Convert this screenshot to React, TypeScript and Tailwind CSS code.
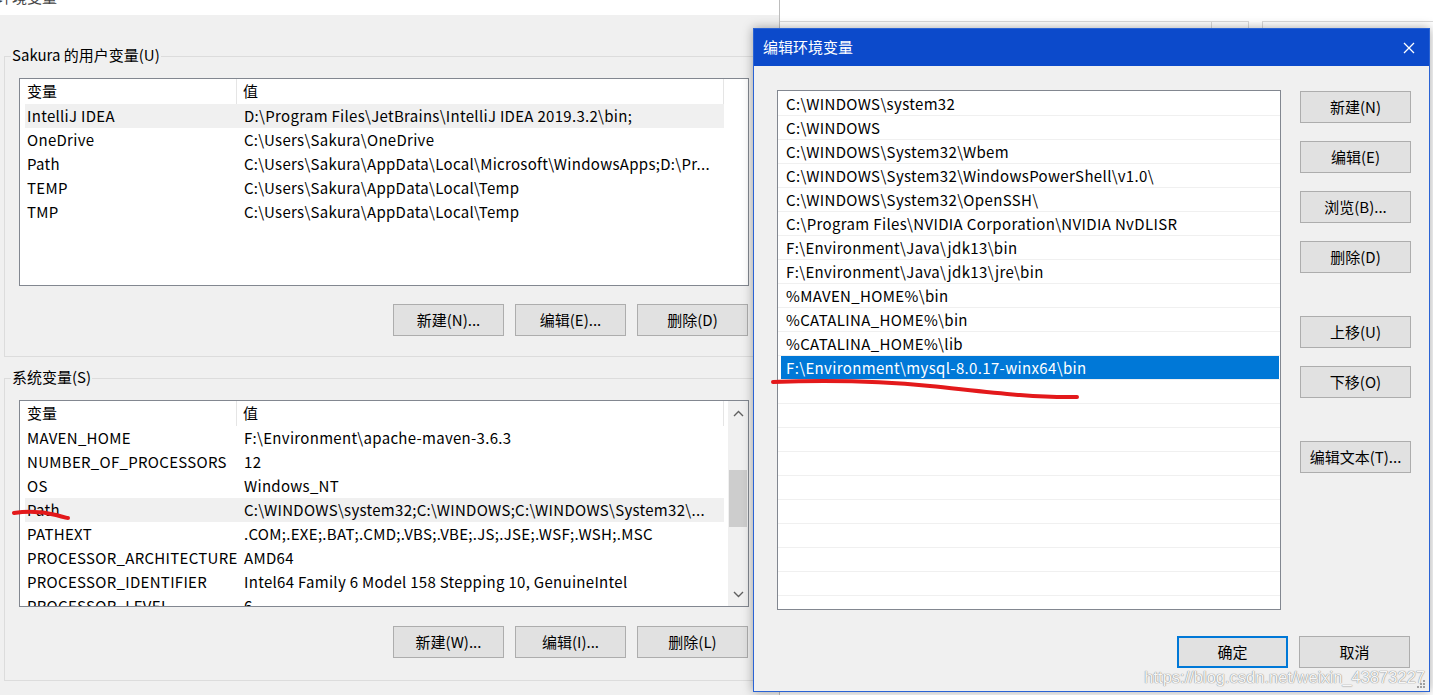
import React from "react";

const userVars: [string, string][] = [
  ["IntelliJ IDEA", "D:\\Program Files\\JetBrains\\IntelliJ IDEA 2019.3.2\\bin;"],
  ["OneDrive", "C:\\Users\\Sakura\\OneDrive"],
  ["Path", "C:\\Users\\Sakura\\AppData\\Local\\Microsoft\\WindowsApps;D:\\Pr..."],
  ["TEMP", "C:\\Users\\Sakura\\AppData\\Local\\Temp"],
  ["TMP", "C:\\Users\\Sakura\\AppData\\Local\\Temp"],
];

const sysVars: [string, string][] = [
  ["MAVEN_HOME", "F:\\Environment\\apache-maven-3.6.3"],
  ["NUMBER_OF_PROCESSORS", "12"],
  ["OS", "Windows_NT"],
  ["Path", "C:\\WINDOWS\\system32;C:\\WINDOWS;C:\\WINDOWS\\System32\\..."],
  ["PATHEXT", ".COM;.EXE;.BAT;.CMD;.VBS;.VBE;.JS;.JSE;.WSF;.WSH;.MSC"],
  ["PROCESSOR_ARCHITECTURE", "AMD64"],
  ["PROCESSOR_IDENTIFIER", "Intel64 Family 6 Model 158 Stepping 10, GenuineIntel"],
  ["PROCESSOR_LEVEL", "6"],
];

const paths = [
  "C:\\WINDOWS\\system32",
  "C:\\WINDOWS",
  "C:\\WINDOWS\\System32\\Wbem",
  "C:\\WINDOWS\\System32\\WindowsPowerShell\\v1.0\\",
  "C:\\WINDOWS\\System32\\OpenSSH\\",
  "C:\\Program Files\\NVIDIA Corporation\\NVIDIA NvDLISR",
  "F:\\Environment\\Java\\jdk13\\bin",
  "F:\\Environment\\Java\\jdk13\\jre\\bin",
  "%MAVEN_HOME%\\bin",
  "%CATALINA_HOME%\\bin",
  "%CATALINA_HOME%\\lib",
  "F:\\Environment\\mysql-8.0.17-winx64\\bin",
];

function Btn({ label, primary = false, className = "" }: { label: string; primary?: boolean; className?: string }) {
  return (
    <div
      className={
        "flex h-[32px] w-[111px] shrink-0 items-center justify-center bg-[#e1e1e1] text-[15px] text-black " +
        (primary ? "border-2 border-[#0078d7] " : "border border-[#adadad] ") +
        className
      }
    >
      {label}
    </div>
  );
}

function VarList({ rows, active, height, scroll = false }: { rows: [string, string][]; active: number; height: string; scroll?: boolean }) {
  return (
    <div className={"relative flex overflow-hidden border border-[#828790] bg-white " + height}>
      <div className="flex-1">
        <div className="ml-[5px] flex h-[25px] w-[699px] items-center text-[15px]">
          <div className="flex h-full w-[212px] items-center border-r border-[#e5e5e5] pl-[2px]">变量</div>
          <div className="flex h-full flex-1 items-center border-r border-[#e5e5e5] pl-[6px]">值</div>
        </div>
        {rows.map(([k, v], i) => (
          <div
            key={k + i}
            className={
              "ml-[5px] flex h-[24px] w-[699px] items-center whitespace-nowrap text-[15px] tracking-[0.3px] " +
              (i === active ? "bg-[#f0f0f0]" : "")
            }
          >
            <div className="w-[212px] shrink-0 pl-[2px]">{k}</div>
            <div className="pl-[7px]">{v}</div>
          </div>
        ))}
      </div>
      {scroll && (
        <div className="flex w-[20px] flex-col items-center bg-[#f0f0f0]">
          <div className="flex h-[24px] items-center justify-center">
            <svg width="11" height="7" viewBox="0 0 11 7">
              <path d="M1 6 L5.5 1.5 L10 6" fill="none" stroke="#606060" strokeWidth="1.4" />
            </svg>
          </div>
          <div className="mt-[45px] h-[57px] w-[18px] bg-[#cdcdcd]" />
          <div className="flex-1" />
          <div className="flex h-[24px] items-center justify-center">
            <svg width="11" height="7" viewBox="0 0 11 7">
              <path d="M1 1 L5.5 5.5 L10 1" fill="none" stroke="#606060" strokeWidth="1.4" />
            </svg>
          </div>
        </div>
      )}
    </div>
  );
}

function Group({ title, children, className = "" }: { title: string; children: React.ReactNode; className?: string }) {
  return (
    <div className={"ml-[4px] w-[767px] border border-[#dcdcdc] pl-[14px] pr-[21px] " + className}>
      <div className="-ml-[8px] -mt-[12px] w-fit bg-[#f0f0f0] px-[1px] text-[15px] leading-[20px]">{title}</div>
      {children}
    </div>
  );
}

function EditDialog() {
  const empty = Array.from({ length: 11 });
  return (
    <div className="absolute left-[753px] top-[28px] flex h-[664px] w-[677px] flex-col border border-[#2a63d4] bg-[#f0f0f0] shadow-[0_0_10px_rgba(0,0,0,0.35)]">
      <div className="flex h-[37px] shrink-0 items-center justify-between bg-[#0c4acb] pl-[9px] pr-[14px] text-[15px] text-white">
        <span>编辑环境变量</span>
        <svg width="12" height="12" viewBox="0 0 12 12">
          <path d="M1 1 L11 11 M11 1 L1 11" stroke="white" strokeWidth="1.3" />
        </svg>
      </div>
      <div className="flex flex-1 pl-[23px]">
        <div className="mt-[24px] h-[520px] w-[504px] overflow-hidden border border-[#828790] bg-white pt-[1px]">
          {paths.map((p, i) => (
            <div key={p} className="h-[24px] border-b border-[#f0f0f0] pl-[3px] pr-[1px]">
              <div
                className={
                  "flex h-full items-center whitespace-nowrap pl-[5px] pt-[1px] text-[15px] tracking-[0.35px] " +
                  (i === paths.length - 1 ? "bg-[#0078d7] text-white" : "text-black")
                }
              >
                {p}
              </div>
            </div>
          ))}
          {empty.map((_, i) => (
            <div key={i} className="h-[24px] border-b border-[#f0f0f0]" />
          ))}
        </div>
        <div className="ml-[19px] flex flex-col">
          <Btn label="新建(N)" className="mt-[25px]" />
          <Btn label="编辑(E)" className="mt-[18px]" />
          <Btn label="浏览(B)..." className="mt-[18px]" />
          <Btn label="删除(D)" className="mt-[18px]" />
          <Btn label="上移(U)" className="mt-[43px]" />
          <Btn label="下移(O)" className="mt-[18px]" />
          <Btn label="编辑文本(T)..." className="mt-[43px]" />
        </div>
      </div>
      <div className="flex shrink-0 justify-end gap-[11px] pb-[23px] pr-[19px]">
        <Btn label="确定" primary />
        <Btn label="取消" />
      </div>
      <div className="pointer-events-none absolute bottom-[6px] right-[4px] whitespace-nowrap font-['Liberation_Sans',sans-serif] text-[16.5px] leading-none text-[#f6f6f6] [text-shadow:0_0_1px_#7a7a7a,0_0_1px_#9a9a9a]">
        https://blog.csdn.net/weixin_43873227
      </div>
      <svg className="absolute bottom-[2px] right-[3px]" width="9" height="9" viewBox="0 0 9 9">
        <rect x="6" y="0" width="2" height="2" fill="#a0a0a0" />
        <rect x="3" y="3" width="2" height="2" fill="#a0a0a0" />
        <rect x="6" y="3" width="2" height="2" fill="#a0a0a0" />
        <rect x="0" y="6" width="2" height="2" fill="#a0a0a0" />
        <rect x="3" y="6" width="2" height="2" fill="#a0a0a0" />
        <rect x="6" y="6" width="2" height="2" fill="#a0a0a0" />
      </svg>
    </div>
  );
}

export default function App() {
  return (
    <div className="relative h-[695px] w-[1433px] overflow-hidden bg-white font-['Noto_Sans_CJK_SC',sans-serif] text-black">
      <div className="flex h-full">
        <div className="flex h-full w-[780px] shrink-0 flex-col border-r border-[#bdbdbd]">
          <div className="flex h-[15px] shrink-0 items-start justify-between overflow-hidden bg-white pr-[14px] text-[15px] leading-[20px] text-[#444]">
            <span className="-ml-[3px] -mt-[13px]">环境变量</span>
            <span className="-mt-[17px] text-[20px] leading-[20px] text-[#777]">×</span>
          </div>
          <div className="flex-1 bg-[#f0f0f0] pt-[41px]">
            <Group title="Sakura 的用户变量(U)" className="pb-[20px]">
              <div className="mt-[13px]">
                <VarList rows={userVars} active={0} height="h-[208px]" />
              </div>
              <div className="mt-[18px] flex justify-end gap-[11px] pr-[1px]">
                <Btn label="新建(N)..." />
                <Btn label="编辑(E)..." />
                <Btn label="删除(D)" />
              </div>
            </Group>
            <Group title="系统变量(S)" className="mt-[21px] pb-[22px]">
              <div className="mt-[13px]">
                <VarList rows={sysVars} active={3} height="h-[207px]" scroll />
              </div>
              <div className="mt-[19px] flex justify-end gap-[11px] pr-[1px]">
                <Btn label="新建(W)..." />
                <Btn label="编辑(I)..." />
                <Btn label="删除(L)" />
              </div>
            </Group>
          </div>
        </div>
        <div className="flex flex-1 items-start pt-[21px]">
          <div className="h-[20px] w-[432px] border-r border-t border-[#d9d9d9]" />
          <div className="h-[20px] w-[37px] border-r border-t border-[#d9d9d9]" />
          <div className="ml-[13px] h-[20px] flex-1 border-l border-t border-[#d9d9d9]" />
        </div>
      </div>
      <EditDialog />
      <svg className="pointer-events-none absolute left-0 top-0" width="1433" height="695">
        <path d="M14 513 C 28 511, 44 512, 56 515 S 66 518, 68 518" fill="none" stroke="#e3191b" strokeWidth="4" strokeLinecap="round" />
        <path d="M773 382 C 830 380, 880 381, 930 386 S 1030 398, 1077 397" fill="none" stroke="#e3191b" strokeWidth="4" strokeLinecap="round" />
      </svg>
    </div>
  );
}
